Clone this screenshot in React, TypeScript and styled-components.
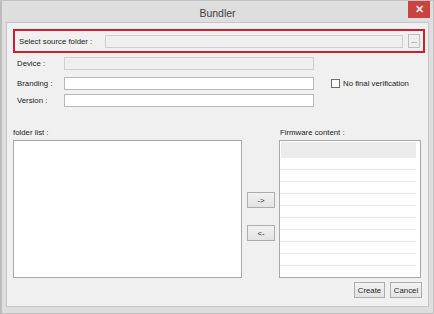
import styled, { createGlobalStyle } from "styled-components";

const GlobalStyle = createGlobalStyle`
  html, body {
    margin: 0;
    padding: 0;
    background: #e9e9e9;
  }
  body {
    font-family: "Liberation Sans", Arial, sans-serif;
    color: #1c1c1c;
  }
`;

const Window = styled.div`
  width: 434px;
  height: 314px;
  box-sizing: border-box;
  background: #dedede;
  border: 1px solid #c2c2c2;
  border-left: 2px solid #bcbcbc;
  display: flex;
  flex-direction: column;
  position: relative;
`;

const TitleBar = styled.div`
  height: 21px;
  display: flex;
  align-items: center;
  justify-content: center;
  font-size: 10.5px;
  color: #3e3e3e;
  padding-top: 2px;
  box-sizing: border-box;
`;

const CloseButton = styled.div`
  position: absolute;
  top: 0;
  right: 3px;
  width: 22px;
  height: 17px;
  background: #c7443f;
  color: #f6e2e2;
  font-size: 11px;
  font-weight: bold;
  display: flex;
  align-items: center;
  justify-content: center;
`;

const Client = styled.div`
  margin: 0 4px 0 4px;
  height: 285px;
  box-sizing: border-box;
  background: #f0f0f0;
  border: 1px solid #c6c6c6;
  padding: 6px 6px 0 6px;
  display: flex;
  flex-direction: column;
  font-size: 7.8px;
`;

const Highlight = styled.div`
  width: 412px;
  height: 24px;
  box-sizing: border-box;
  border: 2px solid #cf1f2e;
  display: flex;
  align-items: center;
  padding: 0 0 0 2px;
`;

const Label = styled.div<{ $w: number }>`
  width: ${(p) => p.$w}px;
  padding-left: 2px;
  box-sizing: border-box;
  white-space: nowrap;
`;

const TextBox = styled.div<{ $w: number; $disabled?: boolean }>`
  width: ${(p) => p.$w}px;
  height: 13px;
  box-sizing: border-box;
  border: 1px solid ${(p) => (p.$disabled ? "#cfcfcf" : "#b9b9b9")};
  background: ${(p) => (p.$disabled ? "#efefef" : "#ffffff")};
`;

const SmallButton = styled.div`
  margin-left: 5px;
  width: 12px;
  height: 14px;
  box-sizing: border-box;
  border: 1px solid #bdbdbd;
  background: #eeeeee;
  font-size: 7px;
  display: flex;
  align-items: flex-end;
  justify-content: center;
  padding-bottom: 3px;
  line-height: 1;
`;

const FormRow = styled.div<{ $mt: number }>`
  margin-top: ${(p) => p.$mt}px;
  display: flex;
  align-items: center;
  padding-left: 2px;
  height: 13px;
`;

const CheckWrap = styled.div`
  margin-left: 17px;
  display: flex;
  align-items: center;
  gap: 3px;
  white-space: nowrap;
`;

const CheckBox = styled.div`
  width: 9px;
  height: 9px;
  box-sizing: border-box;
  border: 1px solid #6e6e6e;
  background: #fff;
`;

const ListsArea = styled.div`
  margin-top: 21px;
  display: flex;
`;

const ListColumn = styled.div<{ $w: number }>`
  width: ${(p) => p.$w}px;
  display: flex;
  flex-direction: column;
`;

const ColumnLabel = styled.div<{ $pl?: number }>`
  height: 9px;
  line-height: 9px;
  margin-bottom: 3px;
  padding-left: ${(p) => p.$pl ?? 0}px;
  white-space: nowrap;
`;

const ListBox = styled.div`
  height: 138px;
  box-sizing: border-box;
  border: 1px solid #a8a8a8;
  background: #ffffff;
  overflow: hidden;
`;

const MoveColumn = styled.div`
  width: 37px;
  padding-top: 64px;
  padding-left: 5px;
  box-sizing: border-box;
  display: flex;
  flex-direction: column;
  gap: 17px;
`;

const PushButton = styled.div<{ $w: number }>`
  width: ${(p) => p.$w}px;
  height: 16px;
  box-sizing: border-box;
  border: 1px solid #adadad;
  background: linear-gradient(#f2f2f2, #e3e3e3);
  display: flex;
  align-items: center;
  justify-content: center;
  font-size: 7.8px;
  color: #262626;
`;

const GridHeader = styled.div`
  height: 16px;
  background: #ececec;
  margin: 1px 4px 0 1px;
`;

const GridRow = styled.div`
  height: 11px;
  border-bottom: 1px solid #e8e8e8;
  margin-right: 4px;
`;

const Footer = styled.div`
  margin-top: 4px;
  display: flex;
  justify-content: flex-end;
  gap: 5px;
`;

export default function App() {
  const rows = Array.from({ length: 10 });
  return (
    <>
      <GlobalStyle />
      <Window>
        <TitleBar>Bundler</TitleBar>
        <CloseButton>✕</CloseButton>
        <Client>
          <Highlight>
            <Label $w={88}>Select source folder :</Label>
            <TextBox $w={298} $disabled />
            <SmallButton>...</SmallButton>
          </Highlight>
          <FormRow $mt={4}>
            <Label $w={49}>Device :</Label>
            <TextBox $w={250} $disabled />
          </FormRow>
          <FormRow $mt={7}>
            <Label $w={49}>Branding :</Label>
            <TextBox $w={250} />
            <CheckWrap>
              <CheckBox />
              No final verification
            </CheckWrap>
          </FormRow>
          <FormRow $mt={4}>
            <Label $w={49}>Version :</Label>
            <TextBox $w={250} />
          </FormRow>
          <ListsArea>
            <ListColumn $w={229}>
              <ColumnLabel>folder list :</ColumnLabel>
              <ListBox />
            </ListColumn>
            <MoveColumn>
              <PushButton $w={28}>-&gt;</PushButton>
              <PushButton $w={28}>&lt;-</PushButton>
            </MoveColumn>
            <ListColumn $w={142}>
              <ColumnLabel $pl={1}>Firmware content :</ColumnLabel>
              <ListBox>
                <GridHeader />
                {rows.map((_, i) => (
                  <GridRow key={i} />
                ))}
              </ListBox>
            </ListColumn>
          </ListsArea>
          <Footer>
            <PushButton $w={31}>Create</PushButton>
            <PushButton $w={32}>Cancel</PushButton>
          </Footer>
        </Client>
      </Window>
    </>
  );
}
